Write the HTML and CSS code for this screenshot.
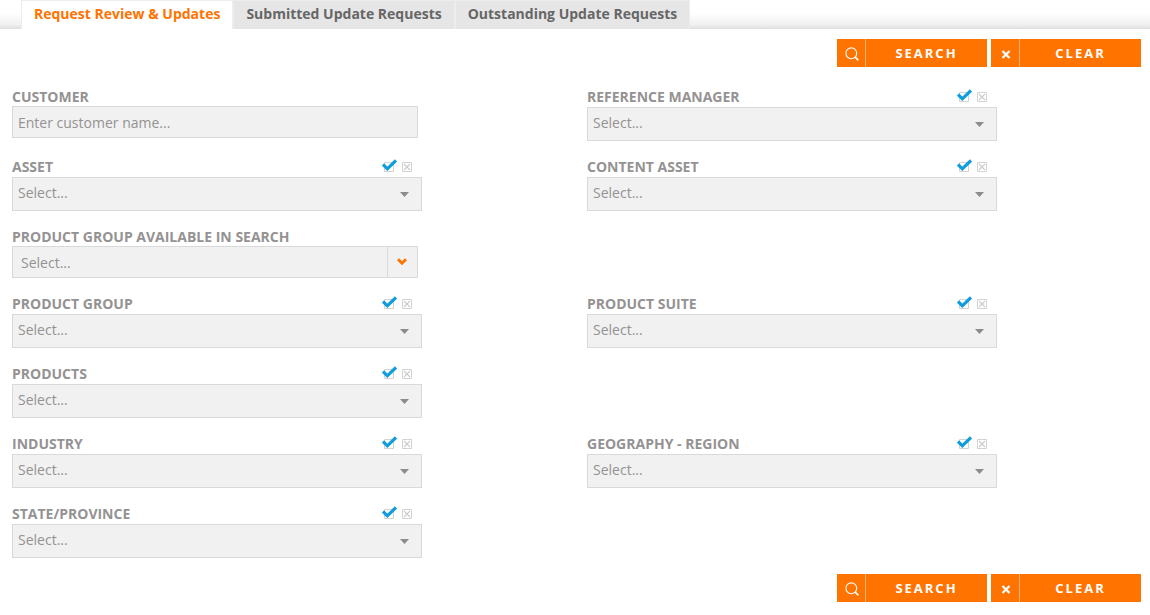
FILE: index.html
```html
<!DOCTYPE html>
<html lang="en">
<head>
  <meta charset="UTF-8">
  <meta name="viewport" content="width=device-width, initial-scale=1.0">
  <title>Request Review &amp; Updates</title>
  <link rel="stylesheet" href="styles.css">
</head>
<body>
  <svg class="sprite" aria-hidden="true">
    <symbol id="icon-search" viewBox="0 0 14 14">
      <circle cx="6.3" cy="6.3" r="5.4" fill="none" stroke="#fff" stroke-width="1.1"/>
      <path d="M10 10L13.4 13.4" stroke="#fff" stroke-width="1.7"/>
    </symbol>
    <symbol id="icon-clear" viewBox="0 0 14 14">
      <path d="M3.5 4L10.5 11M10.5 4L3.5 11" stroke="#fff" stroke-width="2.2"/>
    </symbol>
    <symbol id="icon-check" viewBox="0 0 15 14">
      <path d="M2.5 3.5h9v9h-9z" fill="#fff" stroke="#d2d2d2"/>
      <path d="M1 5.5L5.3 9.8L14 1.5" fill="none" stroke="#0f9ddb" stroke-width="3.2"/>
    </symbol>
    <symbol id="icon-none" viewBox="0 0 10 14">
      <path d="M.5 3.5h9v9h-9z" fill="#fff" stroke="#d2d2d2"/>
      <path d="M2 5L8 11M8 5L2 11" stroke="#cacaca" stroke-width="1.1"/>
    </symbol>
    <symbol id="icon-caret" viewBox="0 0 9 5">
      <path d="M0 0h9L4.5 5z" fill="#8c8c8c"/>
    </symbol>
    <symbol id="icon-chevron" viewBox="0 0 10 8">
      <path d="M1 1.2L5 5.2L9 1.2" fill="none" stroke="#ff7300" stroke-width="2.9"/>
    </symbol>
  </svg>

  <nav class="tabs">
    <a class="tab active" href="#">Request Review &amp; Updates</a>
    <a class="tab" href="#">Submitted Update Requests</a>
    <a class="tab" href="#">Outstanding Update Requests</a>
  </nav>

  <form>
    <div class="actions">
      <button class="action" type="submit"><span class="action-icon"><svg><use href="#icon-search"/></svg></span><span class="action-text">SEARCH</span></button>
      <button class="action" type="reset"><span class="action-icon"><svg><use href="#icon-clear"/></svg></span><span class="action-text">CLEAR</span></button>
    </div>

    <div class="fields">
      <div class="field">
        <div class="field-head short"><label for="customer">CUSTOMER</label></div>
        <input class="box short" type="text" id="customer" placeholder="Enter customer name...">
      </div>
      <div class="field right">
        <div class="field-head">
          <label for="manager">REFERENCE MANAGER</label>
          <button class="tool" type="button" aria-label="Select all"><svg class="check"><use href="#icon-check"/></svg></button>
          <button class="tool" type="button" aria-label="Select none"><svg class="none"><use href="#icon-none"/></svg></button>
        </div>
        <div class="picker">
          <select class="box" id="manager"><option>Select...</option></select>
          <svg class="caret"><use href="#icon-caret"/></svg>
        </div>
      </div>

      <div class="field">
        <div class="field-head">
          <label for="asset">ASSET</label>
          <button class="tool" type="button" aria-label="Select all"><svg class="check"><use href="#icon-check"/></svg></button>
          <button class="tool" type="button" aria-label="Select none"><svg class="none"><use href="#icon-none"/></svg></button>
        </div>
        <div class="picker">
          <select class="box" id="asset"><option>Select...</option></select>
          <svg class="caret"><use href="#icon-caret"/></svg>
        </div>
      </div>
      <div class="field right">
        <div class="field-head">
          <label for="content">CONTENT ASSET</label>
          <button class="tool" type="button" aria-label="Select all"><svg class="check"><use href="#icon-check"/></svg></button>
          <button class="tool" type="button" aria-label="Select none"><svg class="none"><use href="#icon-none"/></svg></button>
        </div>
        <div class="picker">
          <select class="box" id="content"><option>Select...</option></select>
          <svg class="caret"><use href="#icon-caret"/></svg>
        </div>
      </div>

      <div class="field">
        <div class="field-head short"><label for="available">PRODUCT GROUP AVAILABLE IN SEARCH</label></div>
        <div class="picker short">
          <select class="box short single" id="available"><option>Select...</option></select>
          <span class="chevron"><svg><use href="#icon-chevron"/></svg></span>
        </div>
      </div>

      <div class="field">
        <div class="field-head">
          <label for="group">PRODUCT GROUP</label>
          <button class="tool" type="button" aria-label="Select all"><svg class="check"><use href="#icon-check"/></svg></button>
          <button class="tool" type="button" aria-label="Select none"><svg class="none"><use href="#icon-none"/></svg></button>
        </div>
        <div class="picker">
          <select class="box" id="group"><option>Select...</option></select>
          <svg class="caret"><use href="#icon-caret"/></svg>
        </div>
      </div>
      <div class="field right">
        <div class="field-head">
          <label for="suite">PRODUCT SUITE</label>
          <button class="tool" type="button" aria-label="Select all"><svg class="check"><use href="#icon-check"/></svg></button>
          <button class="tool" type="button" aria-label="Select none"><svg class="none"><use href="#icon-none"/></svg></button>
        </div>
        <div class="picker">
          <select class="box" id="suite"><option>Select...</option></select>
          <svg class="caret"><use href="#icon-caret"/></svg>
        </div>
      </div>

      <div class="field">
        <div class="field-head">
          <label for="products">PRODUCTS</label>
          <button class="tool" type="button" aria-label="Select all"><svg class="check"><use href="#icon-check"/></svg></button>
          <button class="tool" type="button" aria-label="Select none"><svg class="none"><use href="#icon-none"/></svg></button>
        </div>
        <div class="picker">
          <select class="box" id="products"><option>Select...</option></select>
          <svg class="caret"><use href="#icon-caret"/></svg>
        </div>
      </div>

      <div class="field">
        <div class="field-head">
          <label for="industry">INDUSTRY</label>
          <button class="tool" type="button" aria-label="Select all"><svg class="check"><use href="#icon-check"/></svg></button>
          <button class="tool" type="button" aria-label="Select none"><svg class="none"><use href="#icon-none"/></svg></button>
        </div>
        <div class="picker">
          <select class="box" id="industry"><option>Select...</option></select>
          <svg class="caret"><use href="#icon-caret"/></svg>
        </div>
      </div>
      <div class="field right">
        <div class="field-head">
          <label for="region">GEOGRAPHY - REGION</label>
          <button class="tool" type="button" aria-label="Select all"><svg class="check"><use href="#icon-check"/></svg></button>
          <button class="tool" type="button" aria-label="Select none"><svg class="none"><use href="#icon-none"/></svg></button>
        </div>
        <div class="picker">
          <select class="box" id="region"><option>Select...</option></select>
          <svg class="caret"><use href="#icon-caret"/></svg>
        </div>
      </div>

      <div class="field">
        <div class="field-head">
          <label for="state">STATE/PROVINCE</label>
          <button class="tool" type="button" aria-label="Select all"><svg class="check"><use href="#icon-check"/></svg></button>
          <button class="tool" type="button" aria-label="Select none"><svg class="none"><use href="#icon-none"/></svg></button>
        </div>
        <div class="picker">
          <select class="box" id="state"><option>Select...</option></select>
          <svg class="caret"><use href="#icon-caret"/></svg>
        </div>
      </div>
    </div>

    <div class="actions">
      <button class="action" type="submit"><span class="action-icon"><svg><use href="#icon-search"/></svg></span><span class="action-text">SEARCH</span></button>
      <button class="action" type="reset"><span class="action-icon"><svg><use href="#icon-clear"/></svg></span><span class="action-text">CLEAR</span></button>
    </div>
  </form>
</body>
</html>
```
FILE: styles.css
```css
* {
  box-sizing: border-box;
}

body {
  margin: 0;
  background: #fff;
  color: #949292;
  font-family: "Open Sans", "Noto Sans", sans-serif;
  font-size: 14px;
}

button,
input,
select {
  font: inherit;
  color: inherit;
}

svg {
  display: block;
}

.sprite {
  display: none;
}

/* tabs */
.tabs {
  display: flex;
  height: 29px;
  padding-left: 21px;
  background: linear-gradient(#fff 45%, #f0f0f0 85%, #dedede);
}

.tab {
  padding: 0 12px;
  border: 1px solid #ededed;
  border-bottom: 0;
  background: #e6e6e6;
  color: #666;
  font-weight: 700;
  line-height: 26px;
  text-decoration: none;
  white-space: nowrap;
}

.tab.active {
  background: #fff;
  color: #ff7300;
}

/* search / clear */
.actions {
  display: flex;
  justify-content: flex-end;
  gap: 4px;
  padding: 10px 9px 0;
}

.action {
  display: flex;
  width: 150px;
  height: 28px;
  padding: 0;
  border: 0;
  background: #ff7300;
  color: #fff;
  font-size: 13px;
  font-weight: 700;
  letter-spacing: 2px;
  line-height: 28px;
}

.action-icon {
  display: flex;
  align-items: center;
  justify-content: center;
  width: 29px;
  height: 28px;
  padding: 1px 0 0 1px;
  border-right: 1px solid #ffb273;
}

.action-icon svg {
  width: 14px;
  height: 14px;
}

.action-text {
  flex: 1;
}

/* form fields */
.fields {
  display: grid;
  grid-template-columns: 1fr 1fr;
  row-gap: 17px;
  padding: 21px 0 6px;
}

.field {
  grid-column: 1;
  max-width: 422px;
  padding-left: 12px;
}

.field.right {
  grid-column: 2;
}

.field-head {
  display: flex;
  gap: 5px;
  height: 19px;
  padding-right: 10px;
  font-weight: 700;
  line-height: 18px;
}

.field-head.short {
  height: 18px;
}

.field-head label {
  flex: 1;
}

.tool {
  height: 15px;
  padding: 1px 0 0;
  border: 0;
  background: none;
}

.tool svg {
  height: 14px;
}

.check {
  width: 15px;
}

.none {
  width: 10px;
}

.picker {
  position: relative;
}

.box {
  display: block;
  width: 100%;
  height: 34px;
  padding: 0 5px 3px;
  border: 1px solid #d9d9d9;
  border-radius: 0;
  background: #f1f1f1;
  appearance: none;
}

.box.short {
  height: 32px;
  padding-bottom: 0;
}

input.short,
.picker.short {
  width: calc(100% - 4px);
}

.box.single {
  padding-left: 8px;
}

.box::placeholder {
  color: #949292;
}

.caret {
  position: absolute;
  top: 15px;
  right: 13px;
  width: 9px;
  height: 5px;
  pointer-events: none;
}

.chevron {
  position: absolute;
  top: 1px;
  right: 1px;
  bottom: 1px;
  display: flex;
  align-items: center;
  justify-content: center;
  width: 30px;
  padding-right: 2px;
  border-left: 1px solid #d9d9d9;
  pointer-events: none;
}

.chevron svg {
  width: 10px;
  height: 8px;
}
```
